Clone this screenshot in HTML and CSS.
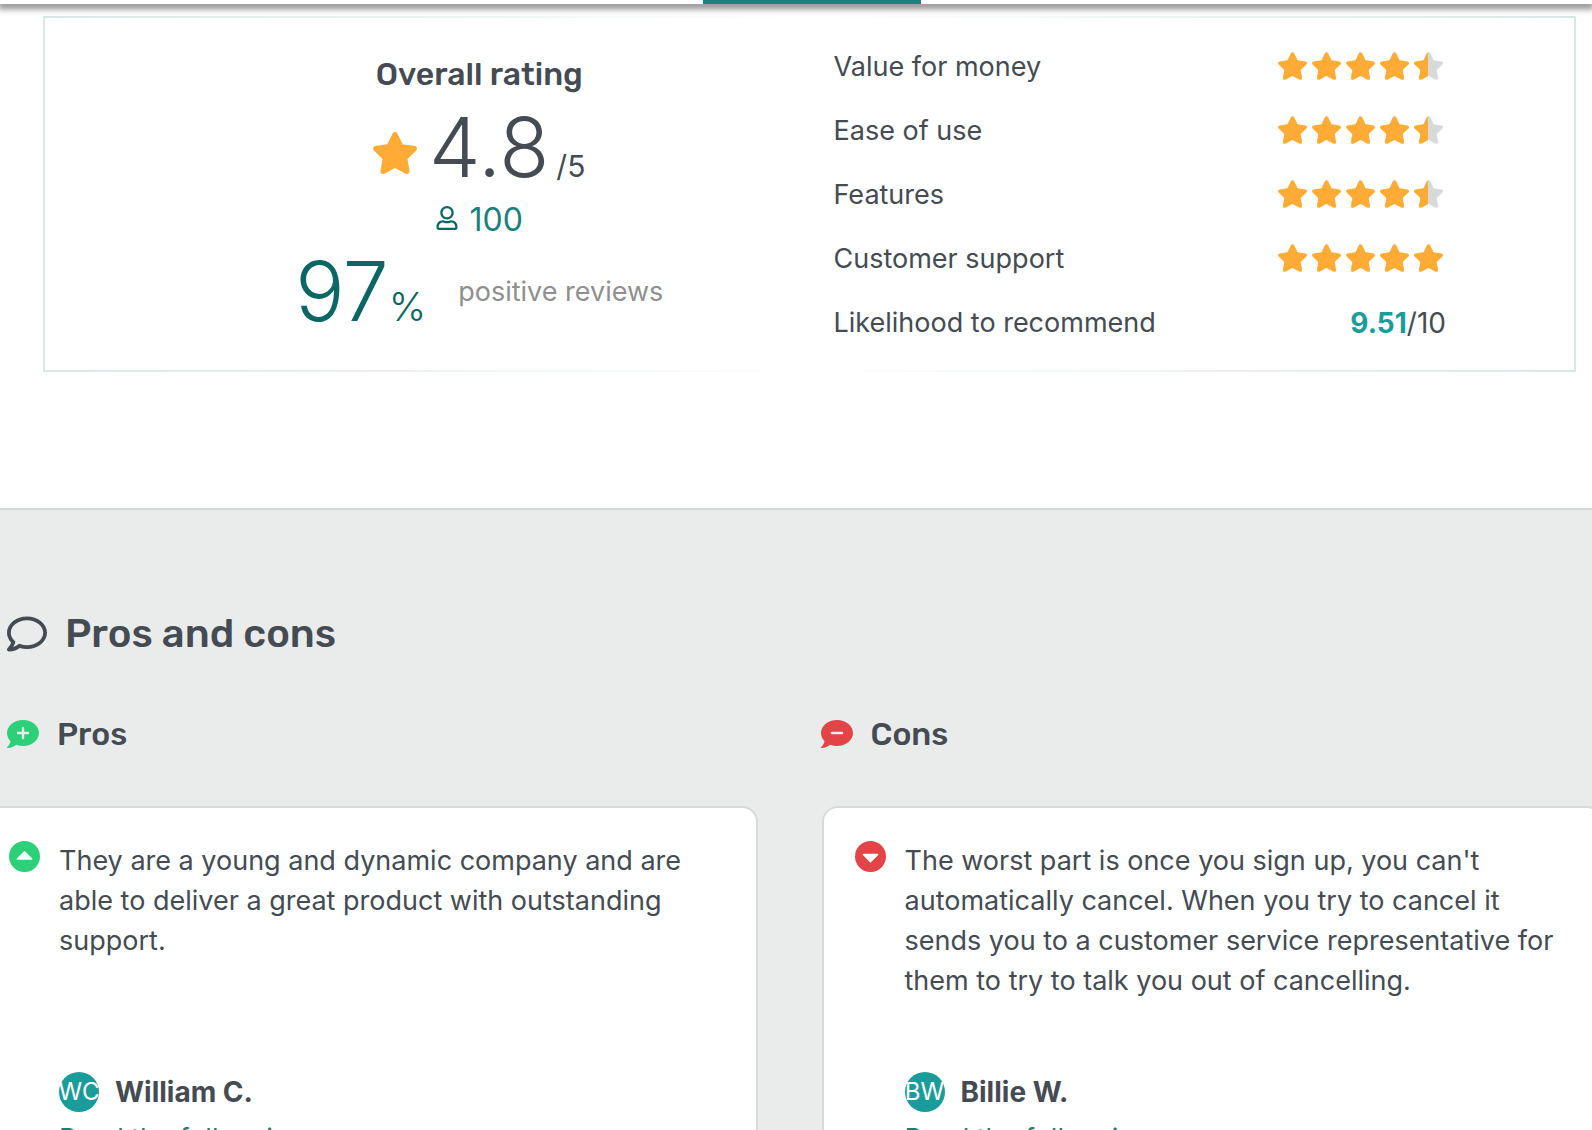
FILE: index.html
```html
<!DOCTYPE html>
<html lang="en">
<head>
<meta charset="utf-8">
<title>Reviews</title>
<link rel="stylesheet" href="styles.css">
</head>
<body>
<svg class="sprite" aria-hidden="true">
  <defs>
    <linearGradient id="half"><stop offset="50%" stop-color="#ffab36"/><stop offset="50%" stop-color="#d7dad9"/></linearGradient>
    <symbol id="star" viewBox="20 0 536 512"><path d="M259.3 17.8L194 150.2 47.9 171.5c-26.2 3.8-36.7 36.1-17.7 54.6l105.7 103-25 145.5c-4.5 26.3 23.2 46 46.4 33.7L288 439.6l130.7 68.7c23.2 12.2 50.9-7.4 46.4-33.7l-25-145.5 105.7-103c19-18.5 8.5-50.8-17.7-54.6L382 150.2 316.7 17.8c-11.7-23.6-45.6-23.9-57.4 0z"/></symbol>
    <symbol id="bubble" viewBox="0 32 512 448"><path d="M256 32C114.6 32 0 125.1 0 240c0 49.6 21.4 95 57 130.7C44.5 421.1 2.7 466 2.2 466.5c-2.2 2.3-2.8 5.7-1.5 8.7S4.8 480 8 480c66.3 0 116-31.8 140.6-51.4 32.7 12.3 69 19.4 107.4 19.4 141.4 0 256-93.1 256-208S397.4 32 256 32z"/></symbol>
  </defs>
</svg>

<header class="topbar"><div class="active-tab"></div></header>

<main>
  <section class="summary">
    <div class="overall">
      <h3 class="subtitle">Overall rating</h3>
      <div class="score">
        <svg class="score-star"><use href="#star"/></svg>
        <span class="big">4.8</span><span class="out-of">/5</span>
      </div>
      <a class="count" href="#reviews">
        <svg class="user" viewBox="0 0 448 512"><path d="M313.6 304c-28.7 0-42.5 16-89.6 16-47.1 0-60.8-16-89.6-16C60.2 304 0 364.2 0 438.4V464c0 26.5 21.5 48 48 48h352c26.5 0 48-21.5 48-48v-25.6c0-74.2-60.2-134.4-134.4-134.4zM400 464H48v-25.6c0-47.6 38.8-86.4 86.4-86.4 14.6 0 38.3 16 89.6 16 51.7 0 74.9-16 89.6-16 47.6 0 86.4 38.8 86.4 86.4V464zM224 288c79.5 0 144-64.5 144-144S303.5 0 224 0 80 64.5 80 144s64.5 144 144 144zm0-240c52.9 0 96 43.1 96 96s-43.1 96-96 96-96-43.1-96-96 43.1-96 96-96z"/></svg>
        100
      </a>
      <div class="positive">
        <div class="percent"><span class="big">97</span><span class="sign">%</span></div>
        <span class="positive-label">positive reviews</span>
      </div>
    </div>
    <dl class="criteria">
      <div class="criterion"><dt>Value for money</dt><dd class="stars"><svg><use href="#star"/></svg><svg><use href="#star"/></svg><svg><use href="#star"/></svg><svg><use href="#star"/></svg><svg class="half"><use href="#star"/></svg></dd></div>
      <div class="criterion"><dt>Ease of use</dt><dd class="stars"><svg><use href="#star"/></svg><svg><use href="#star"/></svg><svg><use href="#star"/></svg><svg><use href="#star"/></svg><svg class="half"><use href="#star"/></svg></dd></div>
      <div class="criterion"><dt>Features</dt><dd class="stars"><svg><use href="#star"/></svg><svg><use href="#star"/></svg><svg><use href="#star"/></svg><svg><use href="#star"/></svg><svg class="half"><use href="#star"/></svg></dd></div>
      <div class="criterion"><dt>Customer support</dt><dd class="stars"><svg><use href="#star"/></svg><svg><use href="#star"/></svg><svg><use href="#star"/></svg><svg><use href="#star"/></svg><svg><use href="#star"/></svg></dd></div>
      <div class="criterion"><dt>Likelihood to recommend</dt><dd class="value"><strong>9.51</strong>/10</dd></div>
    </dl>
  </section>

  <section class="reviews" id="reviews">
    <h2 class="title">
      <svg class="title-icon" viewBox="0 32 512 448"><path d="M256 32C114.6 32 0 125.1 0 240c0 47.6 19.9 91.2 52.9 126.3C38 405.7 7 439.1 6.5 439.5c-6.6 7-8.4 17.2-4.6 26S14.4 480 24 480c61.5 0 110-25.7 139.1-46.3C192 442.8 223.2 448 256 448c141.4 0 256-93.1 256-208S397.4 32 256 32zm0 368c-26.7 0-53.1-4.1-78.4-12.1l-22.7-7.2-19.5 13.8c-14.3 10.1-33.9 21.4-57.5 29 7.3-12.1 14.4-25.7 19.9-40.2l10.6-28.1-20.6-21.8C69.7 314.1 48 282.2 48 240c0-88.2 93.3-160 208-160s208 71.8 208 160-93.3 160-208 160z"/></svg>
      Pros and cons
    </h2>
    <div class="columns">
      <h3 class="subtitle"><svg class="bubble pro" viewBox="0 32 512 448"><use href="#bubble" x="0" y="32" width="512" height="448"/><path class="mark" d="M176 240h160M256 160v160"/></svg>Pros</h3>
      <h3 class="subtitle"><svg class="bubble con" viewBox="0 32 512 448"><use href="#bubble" x="0" y="32" width="512" height="448"/><path class="mark" d="M176 240h160"/></svg>Cons</h3>
    </div>
    <div class="cards">
      <article class="card">
        <svg class="arrow pro" viewBox="0 0 31 31"><circle cx="15.5" cy="15.5" r="15.5"/><path class="caret" d="M7.8 17.4L15 10.3q.5-.5 1 0l7.2 7.1q.7 1.3-.6 1.3H8.4q-1.3-.1-.6-1.3z"/></svg>
        <div class="body">
          <p class="quote">They are a young and dynamic company and are able to deliver a great product with outstanding support.</p>
          <div class="author"><span class="avatar">WC</span><strong>William C.</strong></div>
          <a class="more" href="#william">Read the full review</a>
        </div>
      </article>
      <article class="card">
        <svg class="arrow con" viewBox="0 0 31 31"><circle cx="15.5" cy="15.5" r="15.5"/><path class="caret" d="M7.8 14.1L15 21.2q.5.5 1 0l7.2-7.1q.7-1.3-.6-1.3H8.4q-1.3.1-.6 1.3z"/></svg>
        <div class="body">
          <p class="quote">The worst part is once you sign up, you can't automatically cancel. When you try to cancel it sends you to a customer service representative for them to try to talk you out of cancelling.</p>
          <div class="author"><span class="avatar">BW</span><strong>Billie W.</strong></div>
          <a class="more" href="#billie">Read the full review</a>
        </div>
      </article>
    </div>
  </section>
</main>
</body>
</html>
```
FILE: styles.css
```css
* { box-sizing: border-box; }

body {
  margin: 0;
  height: 100vh;
  overflow: hidden;
  background: #fff;
  color: #444b53;
  font: 400 27px/40px Inter, "Liberation Sans", sans-serif;
}

h2, h3, p, dl, dd { margin: 0; }
a { color: #19807c; text-decoration: none; }
svg { display: block; flex: none; }
.sprite { position: absolute; width: 0; height: 0; }

.topbar {
  display: flex;
  justify-content: center;
  height: 4px;
  padding-left: 32px;
  background: #fff;
  box-shadow: 0 3px 6px 2px rgba(0, 0, 0, .46);
}
.active-tab { width: 218px; background: #1a817f; }

.summary {
  display: grid;
  grid-template-columns: 1fr 1fr;
  gap: 48px;
  margin: 12px 16px 136px 43px;
  padding: 16px 128px;
  border: 2px solid;
  border-image: linear-gradient(90deg, #d8e8e6, #fff 50%, #d8e8e6) 1;
}

.overall { display: flex; flex-direction: column; align-items: center; padding-top: 20px; }
.subtitle { font: 500 32px/40px Rubik, Roboto, sans-serif; }
.score { display: flex; align-items: baseline; height: 88px; margin-top: 10px; }
.score-star { align-self: flex-end; width: 44px; height: 42px; margin: 0 12px 18px 0; fill: #ffab36; }
.big { font-size: 82px; font-weight: 300; line-height: 88px; }
.out-of { margin-left: 7px; font-size: 30px; }
.count { display: flex; align-items: center; gap: 12px; margin-top: 8px; font-size: 32px; }
.user { width: 22px; height: 24px; margin-bottom: 4px; fill: #0c6764; }
.positive { display: flex; align-items: center; gap: 32px; margin-top: 8px; }
.percent { display: flex; align-items: baseline; height: 88px; color: #0c6764; }
.sign { font-size: 40px; font-weight: 300; }
.positive-label { color: #8f8f8f; }

.criterion { display: flex; align-items: center; justify-content: space-between; height: 64px; }
.criterion dt, .value { padding-top: 2px; }
.value { font-size: 28px; }
.criterion strong { color: #1a9c9a; font-weight: 700; }
.stars { display: flex; gap: 5px; padding-right: 3px; }
.stars svg { width: 29px; height: 28px; fill: #ffab36; }
.stars .half { fill: url(#half); }

.reviews {
  border-top: 2px solid #d5d8d7;
  background: #eaeceb;
  padding: 104px 0 64px 7px;
  overflow: hidden;
}
.title {
  display: flex;
  align-items: center;
  gap: 18px;
  font: 500 40px/40px Rubik, Roboto, sans-serif;
}
.title-icon { width: 40px; height: 36px; fill: #444b53; }
.columns { display: grid; grid-template-columns: 1fr 1fr; margin: 60px -42px 0 0; }
.columns .subtitle { display: flex; align-items: center; gap: 18px; }
.bubble { width: 32px; height: 28px; }
.pro { fill: #2bd078; }
.con { fill: #e34448; }
.mark { stroke: #eaeceb; stroke-width: 38; stroke-linecap: round; }

.cards { display: grid; grid-template-columns: 1fr 1fr; gap: 64px; margin: 52px -11px 0 -31px; }
.card {
  display: flex;
  gap: 19px;
  padding: 33px 31px 32px;
  border: 2px solid #d7dad9;
  border-radius: 16px;
  background: #fff;
}
.arrow { width: 31px; height: 31px; }
.caret { fill: #fff; }
.body { display: flex; flex: 1; flex-direction: column; }
.quote { flex: 1; padding-bottom: 71px; }
.author { display: flex; align-items: center; gap: 16px; }
.author strong { font-size: 28px; font-weight: 700; }
.avatar {
  display: flex;
  align-items: center;
  justify-content: center;
  width: 40px;
  height: 40px;
  border-radius: 50%;
  background: #1a9c9a;
  color: #fff;
  font-size: 24px;
}
.more { margin-top: 7px; }
```
